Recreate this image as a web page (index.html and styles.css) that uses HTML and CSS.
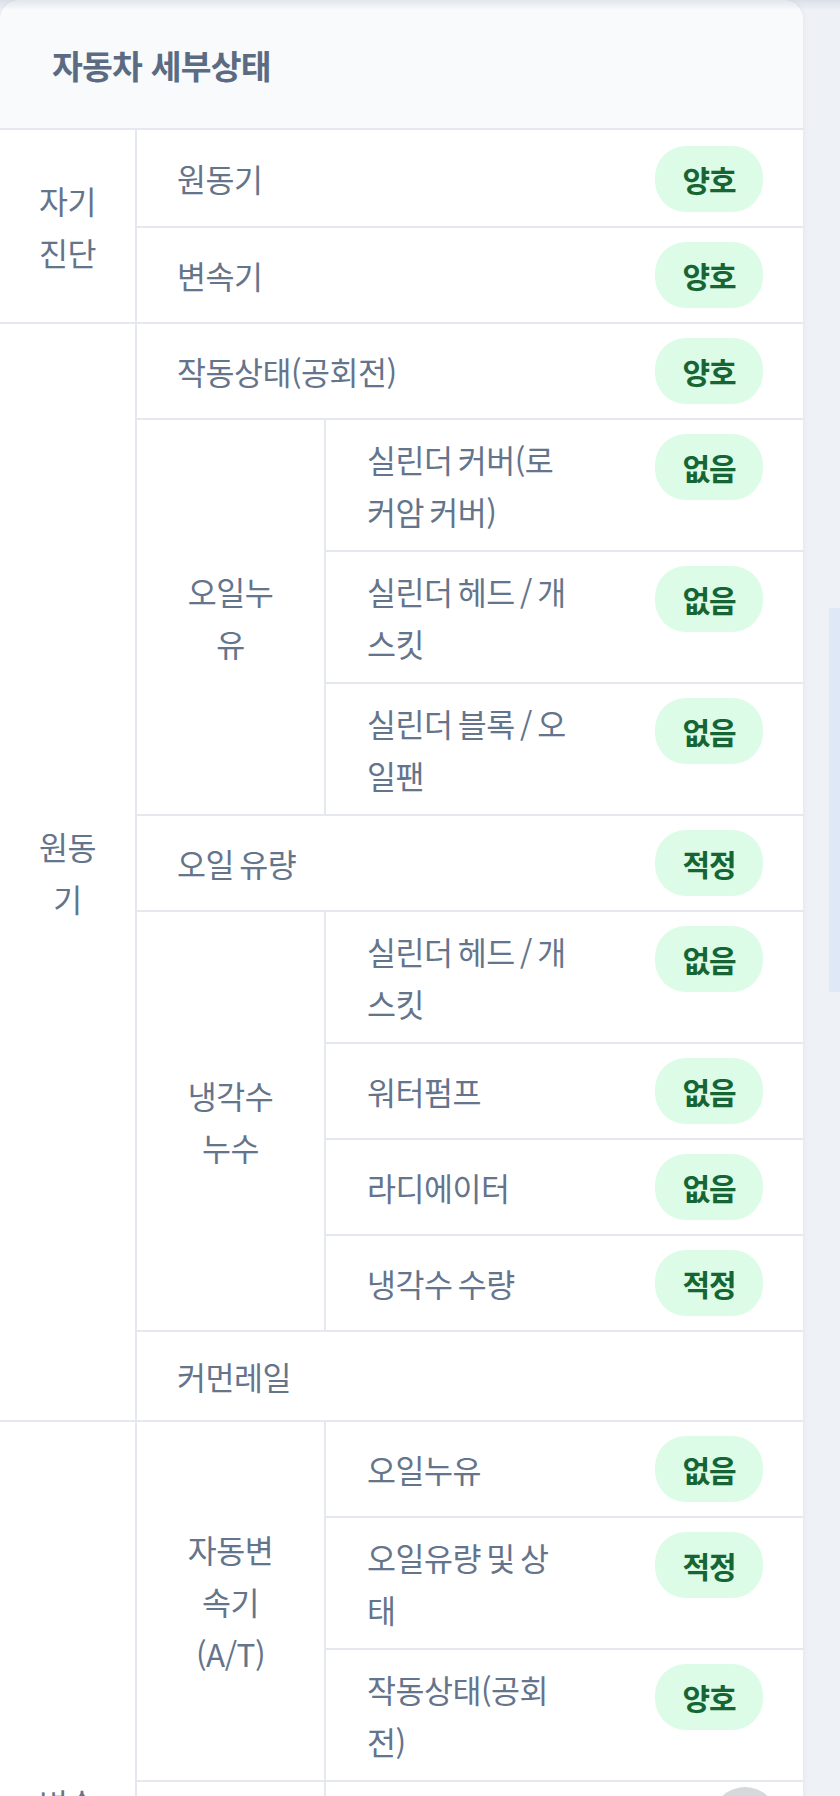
FILE: index.html
```html
<!DOCTYPE html>
<html lang="ko">
<head>
  <meta charset="UTF-8" />
  <meta name="viewport" content="width=device-width, initial-scale=1.0" />
  <title>자동차 세부상태</title>
  <link rel="stylesheet" href="styles.css">
</head>
<body>
  <div class="top-shade"></div>
  <div class="page">
    <div class="card">
      <div class="card-head">
        <h3>자동차 세부상태</h3>
      </div>
      <table class="detail">
        <colgroup>
          <col class="c-cat"><col class="c-sub"><col class="c-item"><col class="c-res">
        </colgroup>
        <tbody>
          <tr class="first">
            <td class="cat" rowspan="2">자기진단</td>
            <td class="item wide" colspan="2">원동기</td>
            <td class="res"><span class="badge">양호</span></td>
          </tr>
          <tr>
            <td class="item wide" colspan="2">변속기</td>
            <td class="res"><span class="badge">양호</span></td>
          </tr>

          <tr>
            <td class="cat" rowspan="10">원동기</td>
            <td class="item wide" colspan="2">작동상태(공회전)</td>
            <td class="res"><span class="badge">양호</span></td>
          </tr>
          <tr>
            <td class="sub" rowspan="3">오일누유</td>
            <td class="item">실린더 커버(로커암 커버)</td>
            <td class="res"><span class="badge">없음</span></td>
          </tr>
          <tr>
            <td class="item">실린더 헤드 / 개스킷</td>
            <td class="res"><span class="badge">없음</span></td>
          </tr>
          <tr>
            <td class="item">실린더 블록 / 오일팬</td>
            <td class="res"><span class="badge">없음</span></td>
          </tr>
          <tr>
            <td class="item wide" colspan="2">오일 유량</td>
            <td class="res"><span class="badge">적정</span></td>
          </tr>
          <tr>
            <td class="sub" rowspan="4">냉각수 누수</td>
            <td class="item">실린더 헤드 / 개스킷</td>
            <td class="res"><span class="badge">없음</span></td>
          </tr>
          <tr>
            <td class="item">워터펌프</td>
            <td class="res"><span class="badge">없음</span></td>
          </tr>
          <tr>
            <td class="item">라디에이터</td>
            <td class="res"><span class="badge">없음</span></td>
          </tr>
          <tr>
            <td class="item">냉각수 수량</td>
            <td class="res"><span class="badge">적정</span></td>
          </tr>
          <tr class="plain">
            <td class="item wide" colspan="2">커먼레일</td>
            <td class="res"></td>
          </tr>

          <tr>
            <td class="cat" rowspan="7">변속기</td>
            <td class="sub" rowspan="3">자동변속기(A/T)</td>
            <td class="item">오일누유</td>
            <td class="res"><span class="badge">없음</span></td>
          </tr>
          <tr>
            <td class="item">오일유량 및 상태</td>
            <td class="res"><span class="badge">적정</span></td>
          </tr>
          <tr>
            <td class="item">작동상태(공회전)</td>
            <td class="res"><span class="badge">양호</span></td>
          </tr>
          <tr class="blank">
            <td class="sub" rowspan="4">수동변속기(M/T)</td>
            <td class="item">오일누유</td>
            <td class="res"></td>
          </tr>
          <tr class="blank">
            <td class="item">기어변속장치</td>
            <td class="res"></td>
          </tr>
          <tr>
            <td class="item">오일유량 및 상태</td>
            <td class="res"></td>
          </tr>
          <tr>
            <td class="item">작동상태(공회전)</td>
            <td class="res"></td>
          </tr>
        </tbody>
      </table>
    </div>
    <div class="side">
      <div class="side-box"></div>
    </div>
  </div>
  <button class="to-top" aria-label="맨 위로"></button>
</body>
</html>
```

FILE: styles.css
```css
body {
  margin: 0;
  background: #eef2f7;
  font-family: "Noto Sans CJK KR", "Noto Sans", sans-serif;
  color: #64748b;
}
.top-shade {
  position: fixed;
  top: 0;
  left: 0;
  right: 0;
  height: 10px;
  background: linear-gradient(rgba(100, 116, 139, 0.14), rgba(100, 116, 139, 0));
  z-index: 5;
}
.page {
  display: flex;
  align-items: flex-start;
}
.card {
  width: 803px;
  flex-shrink: 0;
  background: #fff;
  border-radius: 20px 20px 0 0;
  box-shadow: 0 0 6px rgba(15, 23, 42, 0.06);
  overflow: hidden;
}
.card-head {
  height: 128px;
  display: flex;
  align-items: center;
  padding-left: 52px;
  background: #f8fafc;
  border-bottom: 2px solid #e5e9ef;
}
.card-head h3 {
  margin: 0;
  font-size: 33.5px;
  font-weight: 700;
  letter-spacing: -0.8px;
  color: #5b6b82;
}
.detail {
  width: 100%;
  border-collapse: collapse;
  table-layout: fixed;
  font-size: 31.5px;
  letter-spacing: -0.5px;
  word-spacing: -3px;
  line-height: 52px;
}
.c-cat { width: 136px; }
.c-sub { width: 189px; }
.c-res { width: 192px; }
.detail td {
  border-bottom: 2px solid #e5e9ef;
  padding: 13px 0;
}
.cat, .sub {
  text-align: center;
  vertical-align: middle;
  border-right: 2px solid #e5e9ef;
}
.detail .cat { padding: 13px 36px; }
.detail .sub { padding: 13px 44px; }
.detail .item {
  padding: 13px 41px;
  vertical-align: middle;
}
.detail .item.wide { padding-left: 40px; }
.detail .res {
  padding: 14px 40px 14px 44px;
  vertical-align: top;
  text-align: right;
}
.detail .first .res { padding-top: 16px; }
.plain { height: 90px; }
.blank { height: 96px; }
.badge {
  display: inline-block;
  width: 108px;
  height: 66px;
  line-height: 66px;
  text-align: center;
  border-radius: 31px;
  background: #dcfce7;
  color: #166534;
  font-size: 30px;
  font-weight: 700;
  letter-spacing: -1px;
  word-spacing: 0;
}
.side {
  flex: 1;
  padding: 608px 0 0 26px;
}
.side-box {
  height: 384px;
  background: #dee8f7;
}
.to-top {
  position: fixed;
  left: 712px;
  top: 1787px;
  width: 66px;
  height: 66px;
  border: none;
  border-radius: 50%;
  background: #d6d8dc;
}
```
